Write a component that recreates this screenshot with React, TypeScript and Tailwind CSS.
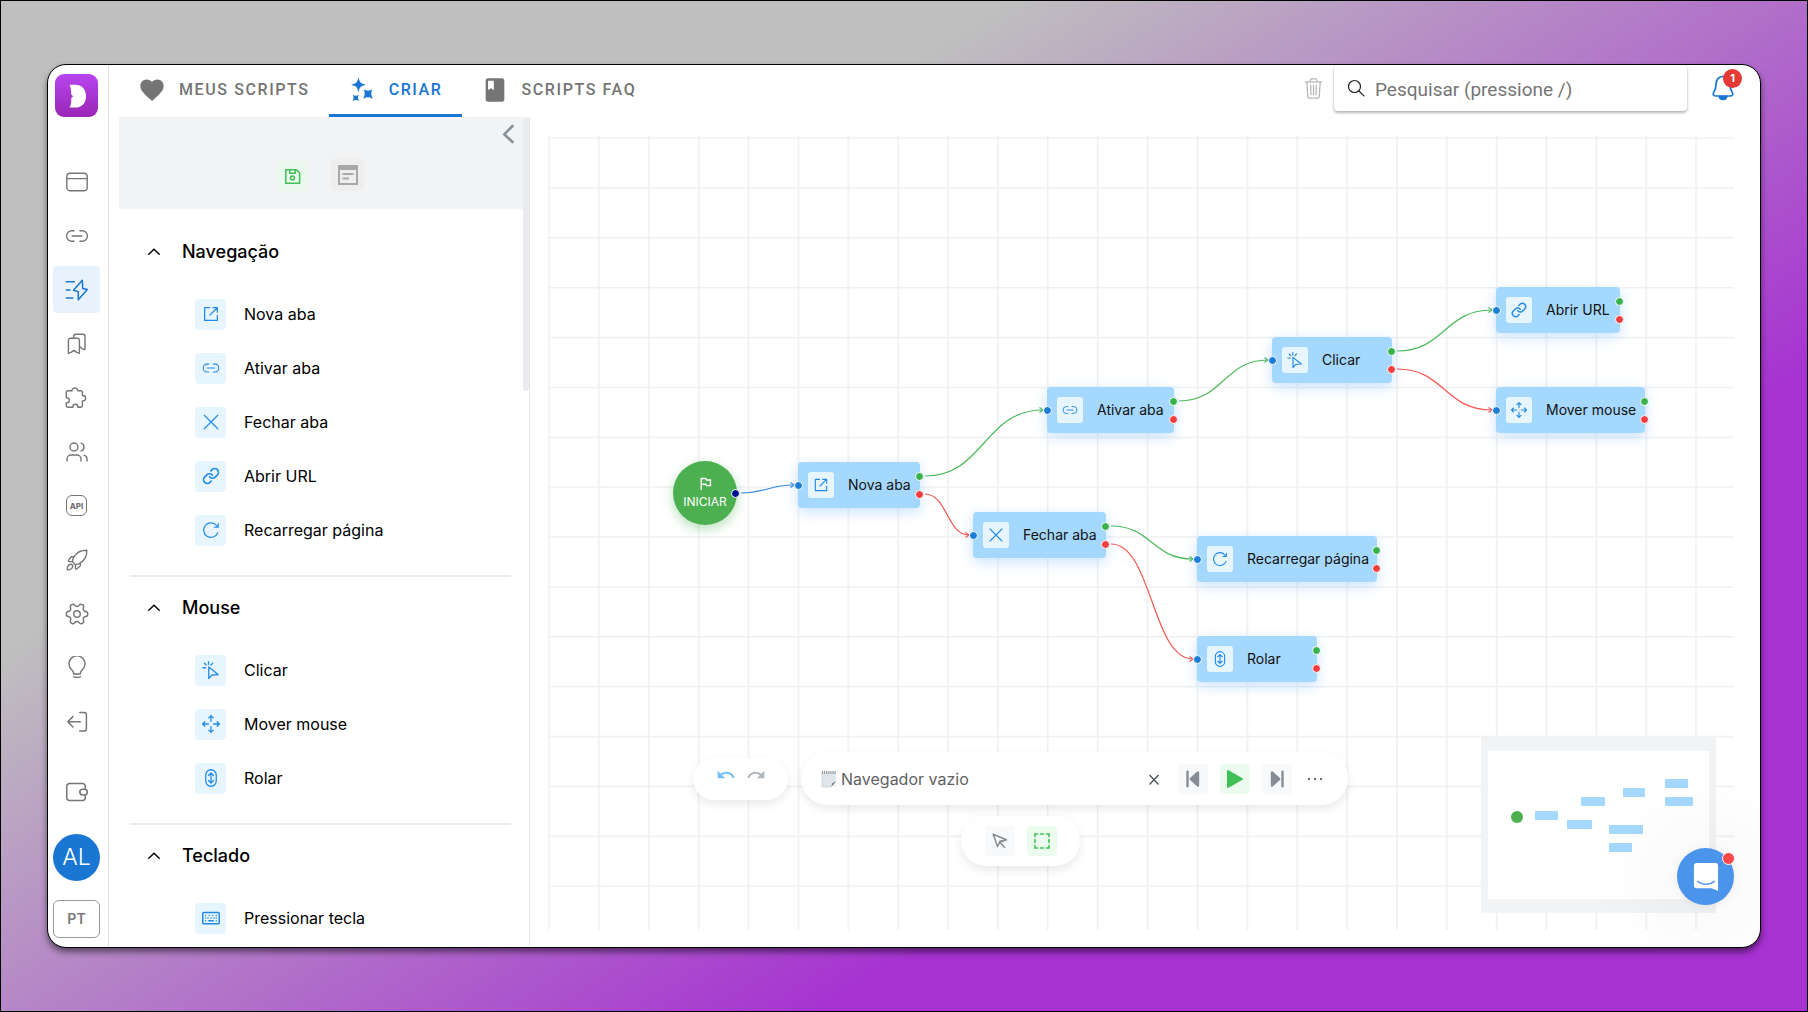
import React from "react";
import { Settings, Users } from "lucide-react";
import { MdBook, MdFavorite, MdOutlinedFlag, MdRedo, MdUndo } from "react-icons/md";

type IconProps = { className?: string };

function Svg({
  className = "size-6",
  sw = 1.4,
  children,
}: IconProps & { sw?: number; children: React.ReactNode }) {
  return (
    <svg
      viewBox="0 0 24 24"
      className={className}
      fill="none"
      stroke="currentColor"
      strokeWidth={sw}
      strokeLinecap="round"
      strokeLinejoin="round"
      aria-hidden="true"
    >
      {children}
    </svg>
  );
}

/* ---------- Sidebar icons ---------- */

const WindowIcon = () => (
  <Svg>
    <rect x="1.8" y="3.2" width="20.4" height="17.6" rx="3.4" />
    <path d="M1.8 8.6h20.4" />
  </Svg>
);
const LinkIcon = ({ className, sw = 1.4 }: IconProps & { sw?: number }) => (
  <Svg className={className} sw={sw}>
    <path d="M9 6.8H6.8a5.2 5.2 0 0 0 0 10.4H9M15 6.8h2.2a5.2 5.2 0 0 1 0 10.4H15M7.2 12h9.6" />
  </Svg>
);
const ScriptIcon = () => (
  <Svg sw={1.5}>
    <path d="M1.4 3.8h8M1.4 12h3.6M1.4 20h6.4M17.3 2.2 8.5 12.3l4.8 1.3v8.2l9-10.2-4.6-1.2Z" />
  </Svg>
);
const BookmarksIcon = () => (
  <Svg>
    <path d="M3.4 8.4a2.2 2.2 0 0 1 2.2-2.2h6.6a2.2 2.2 0 0 1 2.2 2.2v12.9l-2.6-.9-2.9-2-2.9 2-2.6.9ZM8.6 6.2V4.4a2.2 2.2 0 0 1 2.2-2.2h7a2.2 2.2 0 0 1 2.2 2.2v13.2l-2.6-.8-2.6-1.9" />
  </Svg>
);
const PuzzleIcon = () => (
  <Svg>
    <path d="M6.9 4.8a2.9 2.9 0 0 1 5.8 0h2.9q1.8 0 1.8 1.8v2.9h.5a2.7 2.7 0 0 1 0 5.4h-.5v4.4q0 2-2 2h-2.5v-.5a2.5 2.5 0 0 0-5 0v.5H3.3q-2 0-2-2v-2.6h.5a2.5 2.5 0 0 0 0-5h-.5V6.6q0-1.8 1.8-1.8Z" />
  </Svg>
);
const ApiIcon = () => (
  <span className="flex size-[21px] items-center justify-center rounded-[6px] border-[1.5px] border-current text-[8px] font-extrabold leading-none">
    API
  </span>
);
const RocketIcon = () => (
  <Svg>
    <path d="M21.8 2.2C16.4 2 12 4.3 9.3 8.3c-1.2 1.9-1.9 3.4-2 5.3l3.1 3.1c1.9-.1 3.5-.8 5.2-2C19.7 12 22 7.6 21.8 2.2ZM9 8.7H6.6a1 1 0 0 0-.8.4L3.6 12.300c-.4.7 0 1.300.8 1.300h2.900M15.300 15v2.400c0 .3-.1.6-.4.8L11.700 21c-.7.4-1.300 0-1.300-.8v-3.500M5.800 16.300c-2.300.2-3.500 2.200-3.600 5.500 3.300-.1 5.300-1.300 5.500-3.600.1-1.300-.8-2-1.900-1.900Z" />
  </Svg>
);
const BulbIcon = () => (
  <Svg>
    <path d="M8.600 18v-1.100c0-1-.6-1.800-1.500-2.700a8 8 0 1 1 9.800 0c-.9.9-1.500 1.700-1.500 2.700V18ZM8.600 20.800c2.200.7 4.600.7 6.800 0M8.600 18h6.800" />
  </Svg>
);
const LogoutIcon = () => (
  <Svg sw={1.5}>
    <path d="M14.700 2.600h4.500a2.200 2.200 0 0 1 2.200 2.200v14a2.200 2.200 0 0 1-2.200 2.200h-4.500M15.300 11.800H3M7.900 6.600 2.800 11.800l5.100 5.200" />
  </Svg>
);
const WalletIcon = () => (
  <Svg sw={1.5}>
    <path d="M20.300 9V6.300a2.700 2.700 0 0 0-2.700-2.700H4.500a2.700 2.700 0 0 0-2.700 2.700v11.500a2.700 2.700 0 0 0 2.700 2.700h13.100a2.700 2.700 0 0 0 2.700-2.700v-2.700" />
    <rect x="14.800" y="9.200" width="7.600" height="5.800" rx="2.900" />
  </Svg>
);

/* ---------- Command icons ---------- */

const ExternalIcon = ({ className }: IconProps) => (
  <Svg className={className} sw={1.7}>
    <path d="M10 3.500H3.500v17h17V14M14.500 3.500h6v6M20 4l-9.500 9.500" />
  </Svg>
);
const CloseIcon = ({ className }: IconProps) => (
  <Svg className={className} sw={1.6}>
    <path d="m3 3 18 18M21 3 3 21" />
  </Svg>
);
const ChainIcon = ({ className }: IconProps) => (
  <Svg className={className} sw={2.2}>
    <path d="M10 13a5 5 0 0 0 7.540.54l3-3a5 5 0 0 0-7.070-7.070l-1.720 1.710M14 11a5 5 0 0 0-7.540-.54l-3 3a5 5 0 0 0 7.070 7.070l1.710-1.710" />
  </Svg>
);
const ReloadIcon = ({ className }: IconProps) => (
  <Svg className={className} sw={1.6}>
    <path d="M21 15.500A9.700 9.700 0 1 1 19.800 6.500L21 8M21.600 3.500V8.300h-5" />
  </Svg>
);
const ClickIcon = ({ className }: IconProps) => (
  <Svg className={className} sw={1.7}>
    <path d="M9 8v15.500l4-4.800 8.500-.7ZM8.700 1v3.600M1.200 9H4.800M3.300 3l2.300 2.400M14.200 3l-2.300 2.400" />
  </Svg>
);
const MoveIcon = ({ className }: IconProps) => (
  <Svg className={className} sw={1.7}>
    <path d="M12 8.500V1M9 3.800 12 .8l3 3M12 15.500V23M9 20.200l3 3 3-3M8.500 12H1M3.800 9l-3 3 3 3M15.500 12H23M20.200 9l3 3-3 3" />
  </Svg>
);
const ScrollIcon = ({ className }: IconProps) => (
  <Svg className={className} sw={1.7}>
    <rect x="5" y="1" width="14" height="22" rx="7" />
    <path d="M12 5.500v13M8.600 8.600 12 5.300l3.400 3.300M8.600 15.400l3.400 3.300 3.400-3.300" />
  </Svg>
);
const KeyboardIcon = ({ className }: IconProps) => (
  <Svg className={className} sw={2}>
    <rect x="1" y="4.500" width="22" height="15" rx="1.500" />
    <path d="M5 8.500h.01M9.600 8.500h.01M14.200 8.500h.01M19 8.500h.01M5 12h.01M8 12h.01M12 12h.01M16 12h.01M19 12h.01M5 15.700h.01M9 15.700h6M19 15.700h.01" />
  </Svg>
);

/* ---------- Data ---------- */

type Command = { label: string; Icon: React.ComponentType<IconProps> };

const sections: { title: string; items: Command[] }[] = [
  {
    title: "Navegação",
    items: [
      { label: "Nova aba", Icon: ExternalIcon },
      { label: "Ativar aba", Icon: LinkIcon },
      { label: "Fechar aba", Icon: CloseIcon },
      { label: "Abrir URL", Icon: ChainIcon },
      { label: "Recarregar página", Icon: ReloadIcon },
    ],
  },
  {
    title: "Mouse",
    items: [
      { label: "Clicar", Icon: ClickIcon },
      { label: "Mover mouse", Icon: MoveIcon },
      { label: "Rolar", Icon: ScrollIcon },
    ],
  },
  { title: "Teclado", items: [{ label: "Pressionar tecla", Icon: KeyboardIcon }] },
];

const nodes: (Command & { place: string; mini: string })[] = [
  { label: "Nova aba", Icon: ExternalIcon, place: "left-[250px] top-[326px] w-[122px]", mini: "left-[47px] top-[60px] w-[23px]" },
  { label: "Ativar aba", Icon: LinkIcon, place: "left-[499px] top-[251px] w-[127px]", mini: "left-[93px] top-[46px] w-[24px]" },
  { label: "Fechar aba", Icon: CloseIcon, place: "left-[425px] top-[376px] w-[133px]", mini: "left-[79px] top-[69px] w-[25px]" },
  { label: "Clicar", Icon: ClickIcon, place: "left-[724px] top-[201px] w-[120px]", mini: "left-[135px] top-[37px] w-[22px]" },
  { label: "Abrir URL", Icon: ChainIcon, place: "left-[948px] top-[151px] w-[124px]", mini: "left-[177px] top-[28px] w-[23px]" },
  { label: "Mover mouse", Icon: MoveIcon, place: "left-[948px] top-[251px] w-[149px]", mini: "left-[177px] top-[46px] w-[28px]" },
  { label: "Recarregar página", Icon: ReloadIcon, place: "left-[649px] top-[400px] w-[180px]", mini: "left-[121px] top-[74px] w-[34px]" },
  { label: "Rolar", Icon: ScrollIcon, place: "left-[649px] top-[500px] w-[120px]", mini: "left-[121px] top-[92px] w-[23px]" },
];

const GREEN = "#4cba5b";
const RED = "#f4564f";
const edges: [number, number, number, number, string][] = [
  [188, 357, 250, 349, "#3489df"],
  [372, 340, 499, 274, GREEN],
  [372, 358, 425, 399, RED],
  [626, 265, 724, 224, GREEN],
  [558, 390, 649, 423, GREEN],
  [558, 408, 649, 523, RED],
  [844, 215, 948, 174, GREEN],
  [844, 233, 948, 274, RED],
];

/* ---------- Parts ---------- */

function SideButton({ label, active, children }: { label: string; active?: boolean; children: React.ReactNode }) {
  return (
    <button
      aria-label={label}
      className={
        active
          ? "flex size-[47px] items-center justify-center rounded-[4px] bg-[#e8f2fc] text-[#1976d2]"
          : "flex size-[47px] items-center justify-center rounded-[4px] text-[#757575]"
      }
    >
      {children}
    </button>
  );
}

function Sidebar() {
  return (
    <nav className="flex w-[61px] shrink-0 flex-col items-center border-r border-[#e0e0e0] pb-[9px] pr-[3px] pt-[9px]">
      <a href="#inicio" aria-label="Início" className="flex size-[43px] shrink-0 items-center justify-center rounded-[9px] bg-linear-to-b from-[#b845f0] to-[#9826b5]">
        <svg viewBox="0 0 42 42" className="size-[42px]" aria-hidden="true">
          <path d="M13.500 9.800H19c7 0 11 4.700 11 11.400S26 32.600 19 32.600h-5.500c1.300-2 1.800-4.600 1.800-7l-.1-2.400 1.900-2-2-1.900c.3-3.300-.2-6.800-1.600-9.500Z" fill="#fff" />
        </svg>
      </a>
      <div className="mt-[41px] flex flex-col gap-[7px]">
        <SideButton label="Perfis"><WindowIcon /></SideButton>
        <SideButton label="Proxies"><LinkIcon /></SideButton>
        <SideButton label="Automação" active><ScriptIcon /></SideButton>
        <SideButton label="Favoritos"><BookmarksIcon /></SideButton>
        <SideButton label="Extensões"><PuzzleIcon /></SideButton>
        <SideButton label="Equipe"><Users className="size-[24px]" strokeWidth={1.4} /></SideButton>
        <SideButton label="Integração"><ApiIcon /></SideButton>
        <SideButton label="Novidades"><RocketIcon /></SideButton>
        <SideButton label="Configurações"><Settings className="size-[26px] rotate-90" strokeWidth={1.3} /></SideButton>
        <SideButton label="Dicas"><BulbIcon /></SideButton>
        <SideButton label="Sair"><LogoutIcon /></SideButton>
      </div>
      <div className="mt-auto flex flex-col items-center gap-[19px]">
        <SideButton label="Carteira"><WalletIcon /></SideButton>
        <button className="flex size-[47px] items-center justify-center rounded-full bg-[#1976d2] text-[23px] font-light leading-none text-white">
          AL
        </button>
        <button className="flex h-[38px] w-[47px] items-center justify-center rounded-[6px] border border-[#9a9a9a] text-[14px] font-semibold leading-none text-[#7a7a7a]">
          PT
        </button>
      </div>
    </nav>
  );
}

function Tab({ label, active, children }: { label: string; active?: boolean; children: React.ReactNode }) {
  return (
    <button
      role="tab"
      aria-selected={!!active}
      className={
        active
          ? "flex h-full items-center gap-[13px] border-b-[3px] border-[#1976d2] px-[19px] text-[#1976d2]"
          : "flex h-full items-center gap-[13px] border-b-[3px] border-transparent px-[19px] text-[#757575]"
      }
    >
      {children}
      <span className="font-[Roboto,sans-serif] text-[16px] font-medium leading-6 tracking-widest">{label}</span>
    </button>
  );
}

function Header() {
  return (
    <header className="flex h-[52px] shrink-0 items-start pl-[10px]">
      <div role="tablist" className="flex h-full">
        <Tab label="MEUS SCRIPTS"><MdFavorite className="size-[28px]" /></Tab>
        <Tab label="CRIAR" active>
          <svg viewBox="0 0 28 28" className="size-[28px]" fill="currentColor" aria-hidden="true">
            <path d="M10.500 1c.9 5.300 2.300 6.700 7.500 7.800-5.200 1.100-6.600 2.500-7.500 7.700C9.600 11.300 8.200 9.900 3 8.800c5.200-1.100 6.600-2.500 7.500-7.800Z" />
            <path d="M15.300 13c2.700 2 6.700 2 9.400 0-1.900 2.800-1.900 6.700.2 9.800-3-2.200-6.900-2.200-9.800 0 2.100-3.100 2.100-7 .2-9.800Z" />
            <path d="M4.700 18.700c1.900 1.300 4.300 1.300 6.200 0-1.200 1.900-1.200 4.400.2 6.500-2-1.500-4.600-1.500-6.600 0 1.400-2.100 1.400-4.600.2-6.500Z" />
          </svg>
        </Tab>
        <Tab label="SCRIPTS FAQ"><MdBook className="size-[28px]" /></Tab>
      </div>
      <div className="ml-auto flex items-start pr-[24px]">
        <button aria-label="Lixeira" className="mr-[9px] mt-[12px] text-[#b5b5b5]">
          <Svg className="size-[23px]" sw={1.3}>
            <path d="M3.500 5h17M8.500 5V3.500a1.500 1.500 0 0 1 1.500-1.500h4A1.500 1.500 0 0 1 15.500 3.500V5M5 5l1 15.500A1.800 1.800 0 0 0 7.800 22h8.400a1.800 1.800 0 0 0 1.800-1.500L19 5M9 8.500l.4 10M12 8.500v10M15 8.500l-.4 10" />
          </Svg>
        </button>
        <label className="flex h-[46px] w-[353px] items-center rounded-[4px] pl-[13px] shadow-[0_2px_3px_rgba(0,0,0,0.28),0_0_2px_rgba(0,0,0,0.1)]">
          <Svg className="size-[18px] shrink-0 text-[#222]" sw={1.6}>
            <circle cx="10" cy="10" r="8" />
            <path d="m16 16 6.500 6.500" />
          </Svg>
          <input
            type="text"
            aria-label="Pesquisar"
            placeholder="Pesquisar (pressione /)"
            className="ml-[10px] w-full min-w-0 pt-[3px] font-[Roboto,sans-serif] text-[19px] leading-7 text-gray-800 outline-none placeholder:text-[#757575]"
          />
        </label>
        <button aria-label="Notificações, 1 nova" className="relative ml-[23px] mt-[10px] text-[#1976d2]">
          <svg viewBox="0 0 26 26" className="size-[26px]" fill="none" stroke="currentColor" strokeWidth="1.700" strokeLinejoin="round" aria-hidden="true">
            <path d="M13 1.500c-4.400 0-6.900 3-6.900 7.500 0 4-.7 5.800-2.500 8.600-1.200 2 .2 3.400 2.300 3.400h14.200c2.100 0 3.500-1.400 2.300-3.400-1.800-2.800-2.500-4.600-2.500-8.600 0-4.500-2.500-7.500-6.900-7.500Z" />
            <path d="M9.300 21.500c.8 3.800 6.600 3.800 7.400 0Z" fill="currentColor" />
          </svg>
          <span className="absolute -top-[6px] left-[13px] flex size-[19px] items-center justify-center rounded-full bg-[#e53935] text-[11px] font-bold leading-none text-white">
            1
          </span>
        </button>
      </div>
    </header>
  );
}

function Palette() {
  return (
    <aside className="relative ml-[10px] flex w-[411px] shrink-0 flex-col overflow-hidden border-r border-[#e6e7ea]">
      <div className="mr-[6px] flex h-[92px] shrink-0 items-start bg-[#f1f3f5] pl-[158px]">
        <button aria-label="Salvar" className="mt-[44px] flex size-[30px] items-center justify-center rounded-[4px] bg-[#ebf8ee] text-[#40c057]">
          <Svg className="size-[19px]" sw={1.9}>
            <path d="M3.500 3.500h13.500l4 4v13h-17.500ZM8.500 3.500v4.500h7v-4.500" />
            <circle cx="12" cy="13.800" r="2.500" />
          </Svg>
        </button>
        <button aria-label="Detalhes" className="ml-[24px] mt-[41px] flex size-[33px] items-center justify-center rounded-[5px] bg-[#eeeeee] text-[#a8a8a8]">
          <svg viewBox="0 0 20 20" className="size-[20px]" fill="currentColor" aria-hidden="true">
            <path fillRule="evenodd" d="M0 0h20v20H0ZM2 5v13h16V5Z" />
            <path d="M4.500 8h11v2h-11ZM4.500 12.500h6.500v2H4.500Z" />
          </svg>
        </button>
        <button aria-label="Recolher painel" className="ml-auto mr-[8px] mt-[7px] text-[#868e96]">
          <svg viewBox="0 0 14 20" className="h-[20px] w-[14px]" fill="none" stroke="currentColor" strokeWidth="2.600" strokeLinecap="round" strokeLinejoin="round" aria-hidden="true">
            <path d="M11.500 2 3.200 10.300l8.300 7.700" />
          </svg>
        </button>
      </div>
      <span className="absolute right-0 top-0 h-[274px] w-[6px] rounded-[3px] bg-[#e9ebef]" />
      <div className="mr-[6px] min-h-0 flex-1 overflow-hidden pl-[12px] pr-[12px] pt-[12px]">
        {sections.map((s, i) => (
          <section key={s.title} className={i ? "mt-[18px] border-t-2 border-[#e9eaed]" : ""}>
            <h2>
              <button aria-expanded="true" className="flex h-[66px] w-full items-center pb-[5px] pl-[17px] text-left text-[18px] font-medium leading-6 text-black">
                <svg viewBox="0 0 12 8" className="mr-[22px] h-[8px] w-[12px]" fill="none" stroke="currentColor" strokeWidth="1.400" strokeLinecap="round" aria-hidden="true">
                  <path d="M.8 6.200 6 1.200l5.200 5" />
                </svg>
                {s.title}
              </button>
            </h2>
            <ul>
              {s.items.map(({ label, Icon }) => (
                <li key={label}>
                  <button className="flex h-[54px] w-full items-center gap-[18px] pl-[64px] text-left text-[16px] leading-6 text-black">
                    <span className="flex size-[31px] items-center justify-center rounded-[4px] bg-[#e7f5ff] text-[#228be6]">
                      <Icon className="size-[18px]" />
                    </span>
                    {label}
                  </button>
                </li>
              ))}
            </ul>
          </section>
        ))}
      </div>
    </aside>
  );
}

function Edges() {
  return (
    <svg className="absolute inset-0 size-full" fill="none" aria-hidden="true">
      <defs>
        <pattern id="grid" width="49.87" height="49.87" patternUnits="userSpaceOnUse" x="0.3" y="1.3">
          <path d="M49.870 .1H0M.1 0V49.870" stroke="#efefef" strokeWidth="2.800" />
        </pattern>
      </defs>
      <rect width="100%" height="100%" fill="url(#grid)" />
      {edges.map(([x1, y1, x2, y2, color]) => {
        const a = x1 + 5;
        const b = x2 - 4;
        const m = (a + b) / 2;
        return (
          <g key={`${x1}-${y1}`} stroke={color} strokeWidth="1.200">
            <path d={`M${a} ${y1}C${m} ${y1} ${m} ${y2} ${b} ${y2}`} />
            <path d={`M${b - 3.5} ${y2 - 2.5}L${b} ${y2}L${b - 3.5} ${y2 + 2.5}`} />
          </g>
        );
      })}
    </svg>
  );
}

function FlowNode({ label, Icon, place }: Command & { place: string }) {
  return (
    <div className={`absolute flex h-[46px] items-center rounded-[4px] bg-[#a5d8ff] pl-[10px] shadow-[0_4px_14px_rgba(120,185,255,0.4)] ${place}`}>
      <span className="flex size-[26px] shrink-0 items-center justify-center rounded-[3px] bg-[#e7f5ff] text-[#228be6]">
        <Icon className="size-[16px]" />
      </span>
      <span className="ml-[14px] whitespace-nowrap text-[14px] leading-5 text-[#111]">{label}</span>
      <span className="absolute -left-[4px] top-[19px] size-[9px] rounded-full border border-white bg-[#1c7ed6]" />
      <span className="absolute -right-[4px] top-[10px] size-[9px] rounded-full border border-white bg-[#37b24d]" />
      <span className="absolute -right-[4px] top-[28px] size-[9px] rounded-full border border-white bg-[#f03e3e]" />
    </div>
  );
}

function ToolButton({ label, green, children }: { label: string; green?: boolean; children: React.ReactNode }) {
  return (
    <button
      aria-label={label}
      className={
        green
          ? "flex size-[30px] items-center justify-center rounded-[4px] bg-[#ebfbee] text-[#40c057]"
          : "flex size-[30px] items-center justify-center rounded-[4px] bg-[#f8f9fa] text-[#868e96]"
      }
    >
      {children}
    </button>
  );
}

function Toolbar() {
  return (
    <div className="absolute bottom-[64px] left-[145px] flex flex-col items-center gap-[11px]">
      <div className="flex items-center gap-[13px]">
        <div className="flex h-[42px] w-[95px] items-center justify-center gap-[10px] rounded-full bg-white pb-2 shadow-[0_4px_10px_rgba(0,0,0,0.09)]">
          <button aria-label="Desfazer" className="text-[#74c0fc]"><MdUndo className="size-[20px]" /></button>
          <button aria-label="Refazer" className="text-[#adb5bd]"><MdRedo className="size-[20px]" /></button>
        </div>
        <div className="flex h-[53px] w-[547px] items-center rounded-full bg-white pl-[20px] pr-[26px] shadow-[0_4px_10px_rgba(0,0,0,0.09)]">
          <svg viewBox="0 0 16 18" className="mr-[4px] h-[18px] w-[16px]" aria-hidden="true">
            <path d="M1 2.500h14V11l-5 6H1Z" fill="#dfe5ea" />
            <path d="M15 11v6h-5Z" fill="#eceff1" />
            <path d="m15 11.500-5 5.500 1.500-4Z" fill="#6b747c" />
            <path d="M1 2.500V17h9" fill="none" stroke="#c3cad0" strokeWidth=".6" />
            <path d="M1.500 1v3M3.600 1v3M5.700 1v3M7.800 1v3M9.900 1v3M12 1v3M14.100 1v3" stroke="#8f979d" strokeWidth="1.100" />
          </svg>
          <span className="flex-1 text-[16px] leading-6 text-[#616161]">Navegador vazio</span>
          <button aria-label="Limpar" className="mr-[18px] text-[#495057]">
            <svg viewBox="0 0 12 12" className="size-[12px]" fill="none" stroke="currentColor" strokeWidth="1.300" aria-hidden="true">
              <path d="m1.500 2 9 9.500M10.500 2l-9 9.500" />
            </svg>
          </button>
          <div className="flex gap-[12px]">
            <ToolButton label="Passo anterior">
              <svg viewBox="0 0 16 18" className="h-[18px] w-[16px]" fill="currentColor" stroke="currentColor" strokeLinejoin="round" strokeLinecap="round" aria-hidden="true">
                <path d="M2.500 1.800v14.400" strokeWidth="2.400" />
                <path d="M13 2.500v13L5.800 9Z" strokeWidth="2.400" />
              </svg>
            </ToolButton>
            <ToolButton label="Executar" green>
              <svg viewBox="0 0 18 20" className="h-[20px] w-[18px]" fill="currentColor" stroke="currentColor" strokeWidth="2" strokeLinejoin="round" aria-hidden="true">
                <path d="M2 2v16l14-8Z" />
              </svg>
            </ToolButton>
            <ToolButton label="Próximo passo">
              <svg viewBox="0 0 16 18" className="h-[18px] w-[16px]" fill="currentColor" stroke="currentColor" strokeLinejoin="round" strokeLinecap="round" aria-hidden="true">
                <path d="M13.500 1.800v14.400" strokeWidth="2.400" />
                <path d="M3 2.500v13L10.200 9Z" strokeWidth="2.400" />
              </svg>
            </ToolButton>
          </div>
          <button aria-label="Mais opções" className="ml-[16px] flex gap-[4px] pt-px">
            <span className="size-[2px] rounded-full bg-[#343a40]" />
            <span className="size-[2px] rounded-full bg-[#343a40]" />
            <span className="size-[2px] rounded-full bg-[#343a40]" />
          </button>
        </div>
      </div>
      <div className="flex h-[50px] w-[119px] items-center justify-center gap-[12px] rounded-full bg-white shadow-[0_4px_10px_rgba(0,0,0,0.09)]">
        <ToolButton label="Ponteiro">
          <svg viewBox="0 0 16 16" className="size-[16px]" fill="none" stroke="currentColor" strokeWidth="1.500" strokeLinejoin="round" strokeLinecap="round" aria-hidden="true">
            <path d="m1.200 1.200 4.300 12.300 2.300-4.300 4.800 5.200M7.800 9.200l-.1-1 6.800-1.400ZM1.200 1.200l13.300 5.600" />
          </svg>
        </ToolButton>
        <ToolButton label="Seleção" green>
          <svg viewBox="0 0 16 16" className="size-[16px]" fill="none" stroke="currentColor" strokeWidth="1.600" strokeLinecap="round" aria-hidden="true">
            <path d="M1 3.500V1h2.500M6.500 1h3M12.500 1H15v2.500M15 6.500v3M15 12.500V15h-2.500M9.500 15h-3M3.500 15H1v-2.500M1 9.500v-3" />
          </svg>
        </ToolButton>
      </div>
    </div>
  );
}

function MiniMap() {
  return (
    <div className="absolute bottom-[17px] right-[18px] h-[176px] w-[235px] bg-[#f1f3f5] px-[7px] py-[14px]">
      <div className="relative h-full bg-white">
        <span className="absolute left-[23px] top-[60px] size-[12px] rounded-full bg-[#4caf50]" />
        {nodes.map((n) => (
          <span key={n.label} className={`absolute h-[9px] rounded-[1px] bg-[#a5d8ff] ${n.mini}`} />
        ))}
      </div>
    </div>
  );
}

function Canvas() {
  return (
    <main className="relative mb-[17px] ml-[18px] mr-[26px] mt-[19px] min-w-0 flex-1">
      <Edges />
      <div className="absolute left-[125px] top-[325px] flex size-[64px] flex-col items-center justify-center rounded-full bg-[#4caf50] text-white shadow-[0_4px_12px_rgba(76,175,80,0.4)]">
        <MdOutlinedFlag className="size-[17px]" />
        <span className="text-[12px] leading-5">INICIAR</span>
        <span className="absolute -right-[3px] top-[28px] size-[9px] rounded-full border border-white bg-[#00128a]" />
      </div>
      {nodes.map((n) => (
        <FlowNode key={n.label} label={n.label} Icon={n.Icon} place={n.place} />
      ))}
      <Toolbar />
      <MiniMap />
      <button aria-label="Abrir chat" className="absolute bottom-[25px] right-0 flex size-[57px] items-center justify-center rounded-full bg-[#4a94ec] shadow-[0_2px_100px_rgba(0,0,0,0.16),0_1px_8px_rgba(0,0,0,0.06)]">
        <svg viewBox="0 0 28 32" className="h-[30px] w-[26px]" aria-hidden="true">
          <path d="M4.200 1h19.600A3 3 0 0 1 27 4.100V31s-5-3-8.500-3H4.200A3.100 3.100 0 0 1 1 24.900V4.100A3.100 3.100 0 0 1 4.200 1Z" fill="#fff" />
          <path d="M5 20.500c5 4.300 13 4.300 18 0" fill="none" stroke="#4a94ec" strokeWidth="1.500" strokeLinecap="round" />
        </svg>
        <span className="absolute -right-[1px] top-[4px] size-[13px] rounded-full border-[1.5px] border-white bg-[#ff4848]" />
      </button>
    </main>
  );
}

export default function App() {
  return (
    <div className="flex h-screen border border-black bg-[linear-gradient(147deg,#bfbfbf_30%,#a632d1_71%)] px-[46px] py-[63px] font-[Inter,sans-serif]">
      <div className="flex min-w-0 flex-1 overflow-hidden rounded-[19px] border border-black bg-white shadow-[0_4px_6px_rgba(0,0,0,0.5)]">
        <Sidebar />
        <div className="flex min-w-0 flex-1 flex-col">
          <Header />
          <div className="flex min-h-0 flex-1">
            <Palette />
            <Canvas />
          </div>
        </div>
      </div>
    </div>
  );
}
